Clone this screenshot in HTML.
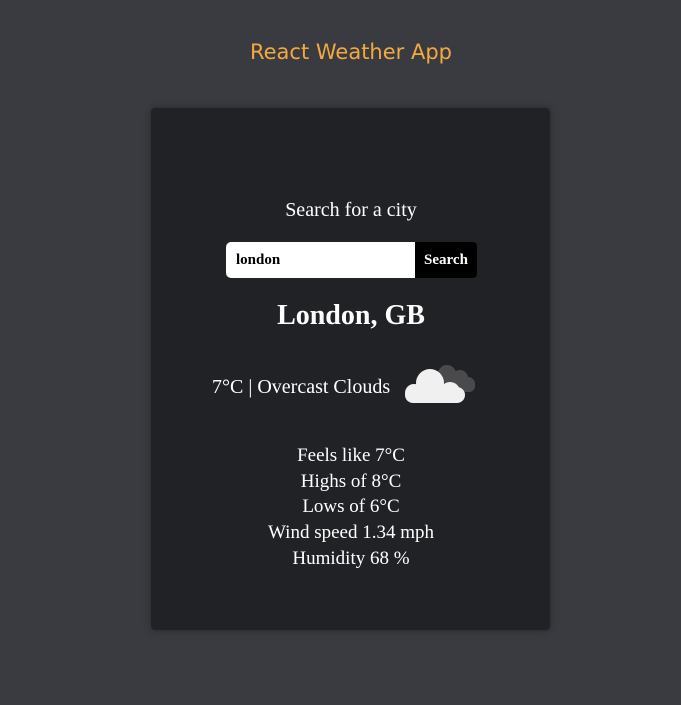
<!DOCTYPE html>
<html><head><meta charset="utf-8"><style>
body{margin:0;width:681px;height:705px;background:#3a3b40;position:relative;overflow:hidden;font-family:"Liberation Serif",serif;color:#fff}
.t{position:absolute;left:151px;width:400px;text-align:center}
h1{position:absolute;left:151px;width:400px;top:40px;margin:0;text-align:center;font-family:"DejaVu Sans","Liberation Sans",sans-serif;font-weight:normal;font-size:21px;color:#f2a93f}
.card{position:absolute;left:151px;top:108px;width:399px;height:522px;background:#212226;border-radius:4px;box-shadow:0 0 8px rgba(0,0,0,.35)}
.inp{position:absolute;left:226px;top:242px;width:189px;height:36px;background:#fff;border-radius:5px 0 0 5px;color:#000;font-weight:bold;font-size:15px;line-height:36px;box-sizing:border-box;padding-left:10px}
.btn{position:absolute;left:415px;top:242px;width:62px;height:36px;background:#000;border-radius:0 4px 4px 0;font-weight:bold;font-size:15px;line-height:36px;text-align:center}
</style></head><body>
<h1>React Weather App</h1>
<div class="card"></div>
<div class="t" style="top:199px;font-size:20px">Search for a city</div>
<div class="inp">london</div><div class="btn">Search</div>
<div class="t" style="top:300px;font-size:28px;font-weight:bold">London, GB</div>
<div style="position:absolute;left:212px;top:376px;font-size:20px">7°C | Overcast Clouds</div>
<svg style="position:absolute;left:400px;top:355px" width="85" height="60" viewBox="0 0 85 60">
<g fill="#4a4a4d"><circle cx="47" cy="19" r="9"/><circle cx="60" cy="23" r="8"/><circle cx="68" cy="29" r="7"/><rect x="45" y="24" width="30" height="13" rx="6"/></g>
<g fill="#f0f0f0"><circle cx="30" cy="28" r="14"/><circle cx="50" cy="37" r="10"/><circle cx="14" cy="38" r="9"/><rect x="5" y="32" width="60" height="16" rx="8"/></g>
</svg>
<div class="t" style="top:443px;font-size:19px;line-height:25.7px">Feels like 7°C<br>Highs of 8°C<br>Lows of 6°C<br>Wind speed 1.34 mph<br>Humidity 68 %</div>
</body></html>
